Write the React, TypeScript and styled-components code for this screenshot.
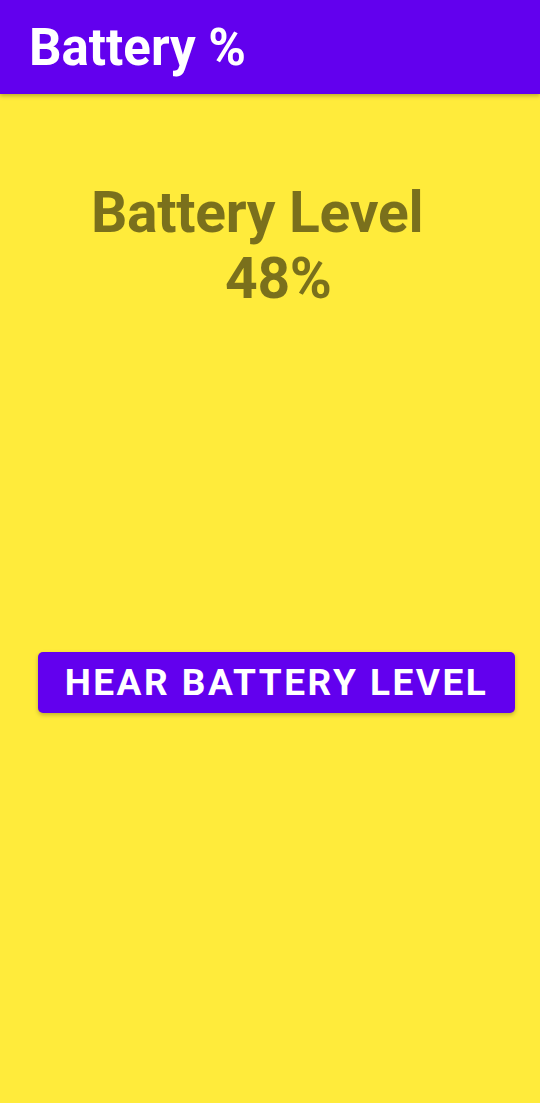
import styled, { createGlobalStyle } from "styled-components";

const GlobalStyle = createGlobalStyle`
  html, body {
    margin: 0;
    padding: 0;
    background: #ffeb3b;
  }
  body {
    font-family: Roboto, "Liberation Sans", sans-serif;
  }
`;

const Screen = styled.div`
  min-height: 1103px;
  background: #ffeb3b;
  display: flex;
  flex-direction: column;
`;

const AppBar = styled.header`
  height: 94px;
  background: #6200ee;
  display: flex;
  align-items: center;
  padding-left: 29px;
  box-shadow: 0 2px 4px rgba(0, 0, 0, 0.25);
`;

const AppTitle = styled.h1`
  margin: 0;
  font-size: 51px;
  font-weight: 700;
  color: #ffffff;
  letter-spacing: 0;
`;

const Reading = styled.section`
  display: flex;
  flex-direction: column;
  align-items: flex-start;
  padding: 86px 0 0 91px;
`;

const ReadingLine = styled.div<{ indent?: number }>`
  margin-left: ${(p) => p.indent || 0}px;
  font-size: 57px;
  line-height: 66px;
  font-weight: 700;
  color: rgba(0, 0, 0, 0.52);
  letter-spacing: -0.3px;
`;

const Actions = styled.div`
  padding: 340px 25px 0 38px;
`;

const HearButton = styled.button`
  width: 100%;
  height: 61px;
  border: none;
  border-radius: 5px;
  background: #6200ee;
  color: #ffffff;
  font-family: Roboto, "Liberation Sans", sans-serif;
  font-size: 37px;
  font-weight: 700;
  text-transform: uppercase;
  letter-spacing: 2.5px;
  box-shadow: 0 2px 4px rgba(0, 0, 0, 0.25);
  cursor: pointer;
`;

export default function App() {
  const level = 48;
  return (
    <Screen>
      <GlobalStyle />
      <AppBar>
        <AppTitle>Battery %</AppTitle>
      </AppBar>
      <Reading>
        <ReadingLine>Battery Level</ReadingLine>
        <ReadingLine indent={134}>{level}%</ReadingLine>
      </Reading>
      <Actions>
        <HearButton>Hear Battery Level</HearButton>
      </Actions>
    </Screen>
  );
}
